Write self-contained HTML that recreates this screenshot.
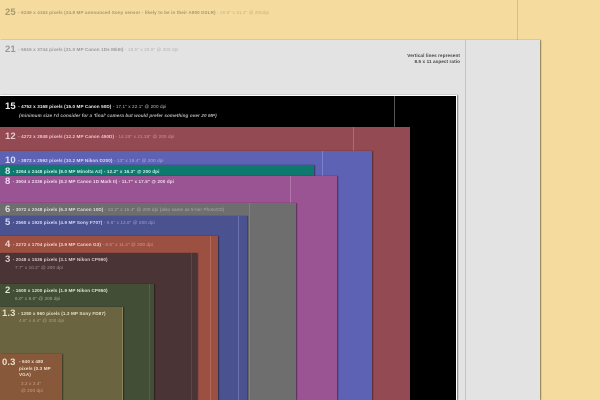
<!DOCTYPE html>
<html><head><meta charset="utf-8"><style>
html,body{margin:0;padding:0;}
body{width:600px;height:400px;overflow:hidden;position:relative;background:#f5dc9e;font-family:"Liberation Sans","DejaVu Sans",sans-serif;}
.b{position:absolute;left:0;bottom:0;box-shadow:1px 0 1px rgba(0,0,0,.45);}
.v{position:absolute;top:0;bottom:0;width:1px;}
.t{position:absolute;white-space:nowrap;font-size:4.6px;font-weight:bold;letter-spacing:0.1px;}
.n{font-size:9.5px;font-weight:bold;margin-right:1px;vertical-align:-1px;}
.s{font-weight:normal;}
</style></head><body>
<div class="v" style="left:517px;background:#d8bf82;height:40px"></div>
<div class="t" style="left:5px;top:7px;color:#a8996a"><span class="n">25</span> - 6249 x 4163 pixels (24.8 MP announced Sony sensor - likely to be in their A900 DSLR) <span class="s" style="color:#c8b27c">- 20.8" x 31.2" @ 200dpi</span></div>

<div class="b" style="top:40px;width:540px;background:#e3e3e3;">
 <div class="v" style="left:465px;background:#c4c4c4"></div>
 <div class="t" style="left:5px;top:4px;color:#9a9a9a"><span class="n">21</span> - 5616 x 3744 pixels (21.0 MP Canon 1Ds MkIII) <span class="s" style="color:#b4b4b4">- 18.5" x 25.5" @ 200 dpi</span></div>
 <div class="t" style="right:80px;top:13px;color:#444;text-align:right;line-height:5.5px">Vertical lines represent<br>8.5 x 11 aspect ratio</div>
</div>

<div class="b" style="top:95px;width:456px;background:#000;border-top:1px solid #fff;border-right:1px solid #fff;">
 <div class="v" style="left:394px;background:#555"></div>
 <div class="t" style="left:5px;top:5px;color:#eee"><span class="n">15</span> - 4752 x 3168 pixels (15.0 MP Canon 50D) <span class="s" style="color:#bbb">- 17.1" x 22.1" @ 200 dpi</span></div>
 <div class="t" style="left:19px;top:17px;color:#bbb;font-style:italic">(minimum size I'd consider for a 'final' camera but would prefer something over 20 MP)</div>
</div>

<div class="b" style="top:127px;width:410px;background:#944a52;">
 <div class="v" style="left:353px;background:#b06a72"></div>
 <div class="t" style="left:5px;top:4px;color:#e8c8cc"><span class="n">12</span> - 4272 x 2848 pixels (12.2 MP Canon 450D) <span class="s" style="color:#c8949a">- 14.25" x 21.36" @ 200 dpi</span></div>
</div>

<div class="b" style="top:151px;width:372px;background:#5d62b5;">
 <div class="v" style="left:322px;background:#7b80cc"></div>
 <div class="t" style="left:5px;top:4px;color:#d8daf4"><span class="n">10</span> - 3872 x 2592 pixels (10.2 MP Nikon D200) <span class="s" style="color:#a8abdc">- 13" x 19.4" @ 200 dpi</span></div>
</div>

<div class="b" style="top:165px;height:11px;bottom:auto;width:314px;background:#0e7a6e;">
 <div class="t" style="left:5px;top:1px;color:#cdeee8"><span class="n">8</span> - 3264 x 2448 pixels (8.0 MP Minolta A2) - 12.2" x 16.3" @ 200 dpi</div>
</div>

<div class="b" style="top:176px;width:337px;background:#9a5493;">
 <div class="v" style="left:290px;background:#b273ab"></div>
 <div class="t" style="left:5px;top:0px;color:#f0d8ee"><span class="n">8</span> - 3504 x 2336 pixels (8.2 MP Canon 1D Mark II) - 11.7" x 17.5" @ 200 dpi</div>
</div>

<div class="b" style="top:203px;width:296px;background:#6e6e6e;">
 <div class="v" style="left:249px;background:#808080"></div>
 <div class="t" style="left:5px;top:1px;color:#ddd"><span class="n">6</span> - 3072 x 2048 pixels (6.3 MP Canon 10D) <span class="s" style="color:#aaa">- 10.2" x 15.4" @ 200 dpi (also same as 5-tier PhotoCD)</span></div>
</div>

<div class="b" style="top:216px;width:247px;background:#4b5290;">
 <div class="v" style="left:238px;background:#6a70b0"></div>
 <div class="t" style="left:5px;top:1px;color:#d8dbf0"><span class="n">5</span> - 2560 x 1920 pixels (4.9 MP Sony F707) <span class="s" style="color:#9aa0cc">- 9.6" x 12.8" @ 200 dpi</span></div>
</div>

<div class="b" style="top:236px;width:218px;background:#9c5042;">
 <div class="v" style="left:210px;background:#b26a5c"></div>
 <div class="t" style="left:5px;top:3px;color:#efd2cc"><span class="n">4</span> - 2272 x 1704 pixels (3.9 MP Canon G3) <span class="s" style="color:#cf9a90">- 8.5" x 11.4" @ 200 dpi</span></div>
</div>

<div class="b" style="top:253px;width:197px;background:#4b3436;">
 <div class="v" style="left:191px;background:#5e4648"></div>
 <div class="t" style="left:5px;top:1px;color:#ddc8c8"><span class="n">3</span> - 2048 x 1536 pixels (3.1 MP Nikon CP990)</div>
 <div class="t" style="left:15px;top:12px;color:#a89090;font-weight:normal">7.7" x 10.2" @ 200 dpi</div>
</div>

<div class="b" style="top:284px;width:154px;background:#434e37;">
 <div class="v" style="left:149px;background:#56623f"></div>
 <div class="t" style="left:5px;top:1px;color:#dfe4d0"><span class="n">2</span> - 1600 x 1200 pixels (1.9 MP Nikon CP950)</div>
 <div class="t" style="left:15px;top:12px;color:#a8b090;font-weight:normal">6.0" x 8.0" @ 200 dpi</div>
</div>

<div class="b" style="top:307px;width:122px;background:#6a6441;border-right:1px solid #8b8458;">
 <div class="t" style="left:2px;top:1px;color:#e6e0c2"><span class="n">1.3</span> - 1280 x 960 pixels (1.3 MP Sony FD87)</div>
 <div class="t" style="left:19px;top:11px;color:#a9a27a;font-weight:normal">4.8" x 6.4" @ 200 dpi</div>
</div>

<div class="b" style="top:354px;width:62px;background:#87583a;">
 <div class="t" style="left:2px;top:3px;color:#f0dcc8"><span class="n">0.3</span></div>
 <div class="t" style="left:19px;top:5px;color:#f0dcc8;line-height:6.5px">- 640 x 480<br>pixels (0.3 MP<br>VGA)</div>
 <div class="t" style="left:21px;top:27px;color:#c9a083;font-weight:normal;line-height:6.5px">3.2 x 2.4"<br>@ 200 dpi</div>
</div>
</body></html>
